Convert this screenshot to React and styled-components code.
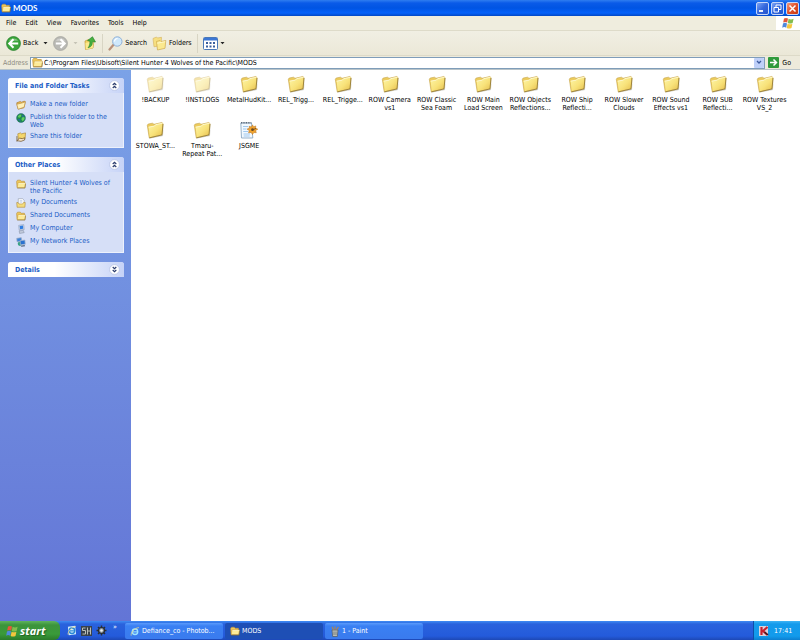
import React from "react";
import styled, { createGlobalStyle } from "styled-components";

const GlobalStyle = createGlobalStyle`
  * {
    box-sizing: border-box;
  }

  body {
    margin: 0;
    font-family: "DejaVu Sans Condensed", "Open Sans", sans-serif;
    font-size: 7px;
    line-height: 8px;
    color: #000;
  }

  button, input {
    font: inherit;
    color: inherit;
    border: none;
    background: none;
    padding: 0;
    margin: 0;
  }

  svg {
    display: block;
    flex: none;
  }
`;

const Window = styled.div`
  min-height: 100vh;
  display: flex;
  flex-direction: column;
  background: #fff;
`;

const TitleBar = styled.header`
  height: 16px;
  display: flex;
  align-items: center;
  gap: 2px;
  padding: 0 1px;
  color: #fff;
  background: linear-gradient(#2f7df0 0, #0a5be8 3px, #0054e3 8px, #0562fa 13px, #0348c4 16px);
`;

const Title = styled.h1`
  flex: 1;
  margin: 0;
  font-size: 8px;
  font-family: Lato, "Open Sans", sans-serif;
  font-weight: 700;
`;

const WindowButton = styled.button`
  width: 13px;
  height: 13px;
  border: 1px solid #c5d6f8;
  border-radius: 2px;
  background: ${(props) =>
    props.$close
      ? "linear-gradient(135deg, #f09a80, #e0502a 50%, #c83a12)"
      : "linear-gradient(135deg, #7ea4f4, #3367dd 50%, #2354cc)"};
`;

const MenuBar = styled.nav`
  height: 15px;
  display: flex;
  align-items: center;
  padding-left: 6px;
  gap: 9px;
  background: #efedde;
  border-bottom: 1px solid #dedbc9;
`;

const MenuItem = styled.button``;

const Flag = styled.div`
  margin-left: auto;
  width: 24px;
  height: 14px;
  display: flex;
  align-items: center;
  justify-content: center;
  background: #fff;
`;

const ToolBar = styled.div`
  height: 25px;
  display: flex;
  align-items: center;
  padding-left: 6px;
  gap: 5px;
  background: linear-gradient(#f1efe3, #ebe8d7);
  border-bottom: 1px solid #dddac8;
`;

const ToolButton = styled.button`
  display: flex;
  align-items: center;
  gap: 2px;
  height: 18px;
`;

const Divider = styled.div`
  width: 1px;
  height: 19px;
  background: #d8d5c4;
`;

const AddressBar = styled.form`
  height: 14px;
  display: flex;
  align-items: center;
  padding: 0 9px 0 3px;
  background: #edeadb;
  border-bottom: 1px solid #b9c4c9;
`;

const AddressLabel = styled.label`
  width: 27px;
  color: #8d8b80;
`;

const AddressField = styled.div`
  flex: 1;
  height: 12px;
  display: flex;
  align-items: center;
  gap: 1px;
  padding-left: 1px;
  background: #fff;
  border: 1px solid #7f9db9;
`;

const AddressInput = styled.input`
  flex: 1;
  min-width: 0;
  height: 10px;
  outline: none;
`;

const DropButton = styled.button`
  width: 10px;
  height: 10px;
  display: flex;
  align-items: center;
  justify-content: center;
  border-radius: 1px;
  background: #bfd0f8;
`;

const GoButton = styled.button`
  display: flex;
  align-items: center;
  gap: 3px;
  margin-left: 3px;
`;

const Main = styled.div`
  flex: 1;
  display: flex;
`;

const Sidebar = styled.aside`
  width: 131px;
  flex: none;
  padding: 8px 7px 8px 8px;
  display: flex;
  flex-direction: column;
  gap: 9px;
  background: linear-gradient(#7ba2e7, #6375d6);
`;

const Panel = styled.section`
  background: #d6dff7;
  border-radius: 3px 3px 0 0;
`;

const PanelHeader = styled.div`
  height: 15px;
  display: flex;
  align-items: center;
  justify-content: space-between;
  padding: 0 4px 0 7px;
  border-radius: 3px 3px 0 0;
  background: linear-gradient(90deg, #fff 40%, #c6d3f7);
`;

const PanelTitle = styled.h2`
  margin: 0;
  font-size: 7px;
  font-weight: 700;
  color: #215dc6;
`;

const TaskList = styled.ul`
  list-style: none;
  margin: 0;
  padding: 6px 4px 4px 7px;
  display: flex;
  flex-direction: column;
  gap: 1px;
  border: 1px solid #edf1fc;
  border-top: none;
`;

const TaskLink = styled.a`
  padding: 1px 0;
  display: flex;
  gap: 4px;
  color: #215dc6;
  text-decoration: none;
  white-space: pre;
`;

const Files = styled.main`
  flex: 1;
  display: grid;
  grid-template-columns: repeat(auto-fill, minmax(46px, 1fr));
  grid-auto-rows: 46px;
  padding: 5px 12px 5px 1px;
`;

const FileItem = styled.button`
  display: flex;
  flex-direction: column;
  align-items: center;
  gap: 3px;
  white-space: pre;
  text-align: center;

  svg {
    opacity: ${(props) => (props.$hidden ? 0.5 : 1)};
  }
`;

const TaskBar = styled.footer`
  height: 19px;
  display: flex;
  align-items: stretch;
  color: #fff;
  background: linear-gradient(#3f8cf3 0, #2a62dd 3px, #245bdb 15px, #1d48b5 19px);
`;

const StartButton = styled.button`
  width: 60px;
  display: flex;
  align-items: center;
  gap: 2px;
  padding-left: 6px;
  font-family: "Open Sans", sans-serif;
  font-size: 11px;
  font-weight: 700;
  font-style: italic;
  text-shadow: 1px 1px 1px #1f5f22;
  border-radius: 0 6px 6px 0;
  background: linear-gradient(#5fb45d 0, #3c943b 4px, #3a9a3a 13px, #2b7a2b 19px);
`;

const QuickLaunch = styled.div`
  width: 64px;
  display: flex;
  align-items: center;
  gap: 4px;
  padding-left: 7px;
`;

const MoreButton = styled.button`
  align-self: flex-start;
  padding-top: 2px;
  margin-left: 2px;
`;

const WindowTab = styled.button`
  width: 98px;
  margin: 2px 1px 1px 1px;
  display: flex;
  align-items: center;
  gap: 2px;
  padding-left: 5px;
  border-radius: 2px;
  background: ${(props) =>
    props.$active ? "#1e4fb5" : "linear-gradient(#5b9bfb, #3a80f3 3px, #3a7bee)"};
`;

const Tray = styled.div`
  margin-left: auto;
  width: 47px;
  display: flex;
  align-items: center;
  gap: 5px;
  padding-left: 5px;
  border-left: 1px solid #0e4fa8;
  background: linear-gradient(#3fb4f5 0, #149aeb 3px, #129bec 15px, #0d7fd0 19px);
`;

const LargeFolder = () => (
  <svg width="18" height="18" viewBox="0 0 18 18">
    <defs>
      <linearGradient id="face" x1="0" y1="0" x2="1" y2="1">
        <stop offset="0" stopColor="#fdf6a8" />
        <stop offset=".55" stopColor="#f8e27a" />
        <stop offset="1" stopColor="#e6bf4e" />
      </linearGradient>
    </defs>
    <path d="M4 17.500 17 15 17.600 4.500 16.500 14 3.500 17Z" fill="#9a9a90" opacity=".5" />
    <path d="M1.300 4.200 2.200 3 6.500 2.200 8 3.300 15.800 1.500 17 2.500 16 13.800 3.200 16.800Z" fill="#eccb5c" stroke="#c6a54c" strokeWidth=".6" />
    <path d="m2.600 6 5.700-1 1.300-1.500 7-1.500-1 11.300L3.800 16.200Z" fill="url(#face)" />
    <path d="m2.600 6.100 5.700-1L9.600 3.700l6.900-1.500" fill="none" stroke="#fffde0" strokeWidth=".8" />
    <path d="M17 3 16 13.900 3.300 16.900" fill="none" stroke="#8f762f" strokeWidth=".8" />
  </svg>
);

const Folder = ({ size = 10 }) => (
  <svg width={size} height={size} viewBox="0 0 11 11">
    <path d="M.7 2.700 1.700 1.300h3l1 1.200h3.600v6.700H1.200Z" fill="#eec75a" stroke="#b8903c" strokeWidth=".7" />
    <path d="M1.300 9.600 2.200 4.300h8.300L9.700 9.600Z" fill="#fdeb98" stroke="#c49c41" strokeWidth=".6" />
    <path d="M2.700 4.900h7.200" stroke="#fffbe0" strokeWidth=".7" />
    <path d="M1.300 10h8.600l.7-4.500" fill="none" stroke="#84672a" strokeWidth=".6" />
  </svg>
);

const OpenFolder = ({ size = 10 }) => (
  <svg width={size} height={size} viewBox="0 0 14 14">
    <path d="M1 4 6 2l1.500 1L12 1.500l1 1L11 11l-8 1.500Z" fill="#e9b94f" stroke="#a9772f" strokeWidth=".9" />
    <path d="m1 6 8-2 4-1.500L11.500 10 3 13Z" fill="#fff0b8" stroke="#b8893d" strokeWidth=".9" />
  </svg>
);

const ArrowBall = ({ size, color, edge, left }) => (
  <svg width={size} height={size} viewBox="0 0 16 16">
    <circle cx="8" cy="8" r="7.4" fill={color} stroke={edge} strokeWidth=".8" />
    <path d="M3 5a6 5 0 0 1 10 0Z" fill="#fff" opacity=".35" />
    <path
      d={left ? "M8 3.500 3.500 8 8 12.500M4 8h9" : "M8 3.500 12.500 8 8 12.500M12 8H3"}
      fill="none"
      stroke="#fff"
      strokeWidth="2.2"
    />
  </svg>
);

const Caret = ({ color = "#222" }) => (
  <svg width="5" height="4" viewBox="0 0 5 4">
    <path d="M.5 1h4l-2 2.200Z" fill={color} />
  </svg>
);

const UpFolder = () => (
  <svg width="14" height="14" viewBox="0 0 14 14">
    <path d="M2 5 5.500 3.500l1 1L11 3.500 10 12l-7.500 1.500Z" fill="#f2d160" stroke="#c29b3c" strokeWidth=".7" />
    <path d="m2.500 7 8-2L9.800 12l-7 1.400Z" fill="#fbe98c" />
    <path d="M5 11.800C8.500 11 9.500 8.500 9.300 5.800L12.500 6 9.500.7 4.500 4.600l2.400.6C7 8 6.500 10 5 11.800Z" fill="#46b040" stroke="#24802a" strokeWidth=".6" />
  </svg>
);

const SearchIcon = () => (
  <svg width="15" height="15" viewBox="0 0 15 15">
    <path d="M1.500 13.500 5.500 8.800" stroke="#b9917a" strokeWidth="2.200" strokeLinecap="round" />
    <circle cx="9.300" cy="5.500" r="4.700" fill="#cfe8fb" stroke="#8fb0d6" />
    <path d="M6.500 5.500a3 3 0 0 1 3-3" stroke="#fff" fill="none" strokeWidth="1.200" />
  </svg>
);

const FoldersIcon = () => (
  <svg width="15" height="15" viewBox="0 0 15 15">
    <path d="M1 2.500 4.500 1l1 1 4-.7L9 9.500l-7 1.300Z" fill="#f6df80" stroke="#d9b968" strokeWidth=".7" />
    <path d="m4.500 5.500 3.500-1 1 1 4.800-1L13 12.300 5.500 14Z" fill="#fbe98f" stroke="#cfa94c" strokeWidth=".7" />
    <path d="m5.200 7.200 8-1.500" stroke="#fffbd8" strokeWidth=".8" />
  </svg>
);

const ViewsIcon = () => (
  <svg width="15" height="13" viewBox="0 0 15 13">
    <rect x=".5" y=".5" width="14" height="12" rx="1" fill="#fff" stroke="#4a78b8" />
    <path d="M1 1h13v2.500H1Z" fill="#3c77d4" />
    <path d="M3 5h2v2H3zM6.500 5h2v2h-2zM10 5h2v2h-2zM3 8.500h2v2H3zM6.500 8.500h2v2h-2zM10 8.500h2v2h-2z" fill="#3b5f9d" />
  </svg>
);

const WindowsFlag = ({ size = 12 }) => (
  <svg width={size} height={size} viewBox="0 0 12 12">
    <path d="M2 1.500q2-1.200 4 0L5.200 5.600q-2-1.200-4 0Z" fill="#e5573a" />
    <path d="M6.600 1.800q2.300 1.200 5 0l-1 4.200q-2.600 1.200-4.800 0Z" fill="#83bd4d" />
    <path d="M1 6.400q2-1.200 4 0L4.200 10.700q-2-1.200-4 0Z" fill="#5088dc" />
    <path d="M5.600 6.700q2.200 1.200 4.800 0l-.9 4.200q-2.600 1.200-4.800 0Z" fill="#f5c63d" />
  </svg>
);

const Chevrons = ({ down }) => (
  <svg width="11" height="11" viewBox="0 0 11 11">
    <circle cx="5.500" cy="5.500" r="4.900" fill="#fff" stroke="#b5c1e3" strokeWidth=".8" />
    <path
      d={down ? "m3.700 3 1.800 1.700L7.300 3M3.700 6l1.800 1.700L7.300 6" : "m3.700 5 1.800-1.700L7.300 5M3.700 8l1.800-1.700L7.300 8"}
      fill="none"
      stroke="#27396b"
      strokeWidth="1.100"
    />
  </svg>
);

const Globe = () => (
  <svg width="10" height="10" viewBox="0 0 11 11">
    <circle cx="5.500" cy="5.500" r="4.900" fill="#1f8a4c" stroke="#286581" strokeWidth=".6" />
    <path d="M2 3.500 4.500 1.500 6 3 4.500 5 3 5.200ZM6.500 5l2.500-.5.500 2L7.500 9 6 7.500Z" fill="#5fce62" />
    <path d="M6.500 2 9 3.500l-2 .8ZM2 6.500l2.500.5.500 2.500Z" fill="#2b64b5" />
  </svg>
);

const ShareIcon = () => (
  <svg width="10" height="10" viewBox="0 0 11 11">
    <path d="m2 2 3-1 1 1 4.500-1-.5 6.500-7.500 1Z" fill="#f4d66c" stroke="#a98330" strokeWidth=".7" />
    <path d="M1 4.500v6M1 9.500 4 6.800l3 .5 2.500-1v2.500L5.500 10.300Z" fill="#f7e3c5" stroke="#71562c" strokeWidth=".8" />
  </svg>
);

const DocsIcon = () => (
  <svg width="10" height="10" viewBox="0 0 11 11">
    <path d="M2.500.8h4.700L9 2.500v6H2.500Z" fill="#fff" stroke="#8790a3" strokeWidth=".6" />
    <path d="M4 3h3M4 4.500h3" stroke="#88a7d6" strokeWidth=".6" />
    <path d="M.8 5h1.500l1 1.500h4L8.300 5h1.900l-.4 5.200H1.200Z" fill="#f4dc7d" stroke="#a98330" strokeWidth=".6" />
  </svg>
);

const ComputerIcon = () => (
  <svg width="10" height="10" viewBox="0 0 11 11">
    <path d="m3 1.500 5.500-.8.500 5.500-5.500.5Z" fill="#dbe2ee" stroke="#7f90ad" strokeWidth=".6" />
    <path d="m4 2.300 3.700-.6.300 3.600-3.600.4Z" fill="#2f7ee3" />
    <path d="m3.500 7.500 4.500-.5 1 2.500-5 .9Z" fill="#c3cbdc" stroke="#8390a7" strokeWidth=".6" />
  </svg>
);

const NetworkIcon = () => (
  <svg width="10" height="10" viewBox="0 0 11 11">
    <path d="m.8 1.500 5-.8.400 4-5 .6Z" fill="#3b82d8" stroke="#9aaac4" strokeWidth=".8" />
    <circle cx="4.200" cy="7.500" r="2.300" fill="#38a184" />
    <path d="m4.500 4 5.300-.7.400 4.700-5.300.6Z" fill="#2a72cf" stroke="#a9b8cf" strokeWidth=".8" />
    <path d="m5 9.500 4.500-.6.500 1.200-4 .5Z" fill="#56657f" />
  </svg>
);

const NotePad = () => (
  <svg width="18" height="18" viewBox="0 0 18 18">
    <path d="M.8 2h10.700l1.300 15H1.500Z" fill="#f2f9ff" stroke="#7f9fbd" strokeWidth=".8" />
    <path d="M1 1.800h10.500" stroke="#53606e" strokeWidth="1.600" strokeDasharray=".9 .8" />
    <path d="M3 5.500h5M3 8h3.500M3.200 10.500h5M3.500 13h6.500M3.700 15h6" stroke="#8bbbe8" strokeWidth=".8" />
    <path d="m12.500 3.800 1 2 2.300-.9-.2 2.200 2.200 1.100-2.200 1.300.7 2.200-2.400-.2-1.400 2-1.300-2.100-2.700.4.800-2.200-2.300-1.500 2.400-.9-.3-1.900 2.300.6Z" fill="#f0a32e" stroke="#b8701c" strokeWidth=".5" />
    <circle cx="12.500" cy="8.700" r="1.400" fill="#6b4a22" />
    <path d="m12.500 8.900 3.500-1.500" stroke="#6b4a22" strokeWidth=".9" />
  </svg>
);

const IEIcon = ({ boxed }) => (
  <svg width="10" height="11" viewBox="0 0 11 11">
    {boxed && <path d="M1 1.500 9 .3l1 9.200-8 1.200Z" fill="#d3ecfa" />}
    <circle cx="5.500" cy="5.800" r="3" fill="none" stroke={boxed ? "#2687d6" : "#9fe4ff"} strokeWidth="1.500" />
    <path d="M3 5.900h5.500" stroke={boxed ? "#2687d6" : "#9fe4ff"} strokeWidth="1.200" />
    <path d="M1.300 10C.5 7 5 1.500 9.800 1.200" fill="none" stroke="#e5d58e" strokeWidth=".9" />
  </svg>
);

const HunterIcon = () => (
  <svg width="11" height="10" viewBox="0 0 11 10">
    <rect width="11" height="10" fill="#39424c" />
    <path d="M4.500 2H1.500v2.500h3V8h-3M6.500 1.500v7M9.500 1.500v7M6.500 5h3" fill="none" stroke="#b9beb8" />
  </svg>
);

const WheelIcon = () => (
  <svg width="11" height="11" viewBox="0 0 11 11">
    <path d="M5.500.5v10M.5 5.500h10M2 2l7 7M9 2 2 9" stroke="#2b2f36" strokeWidth="1.500" />
    <circle cx="5.500" cy="5.500" r="3" fill="#8b949b" stroke="#252a31" strokeWidth="1.200" />
    <circle cx="5.500" cy="5.500" r="1.300" fill="#edf1f3" />
  </svg>
);

const PaintIcon = () => (
  <svg width="10" height="11" viewBox="0 0 10 11">
    <path d="M2 4h6l-.7 6.500H2.700Z" fill="#b9bdb7" stroke="#4d5965" strokeWidth=".7" />
    <path d="M3.500 4 2 .8M5 4V.5M6.500 4 8.500 1" stroke="#b88645" strokeWidth="1.100" />
    <path d="M4 5.500v3.500M6 5.500v3.500" stroke="#68716f" strokeWidth=".8" />
  </svg>
);

const KasperskyIcon = () => (
  <svg width="10" height="10" viewBox="0 0 10 10">
    <rect width="9" height="10" fill="#d9d2dc" />
    <path d="M2.500 1v8M8.500 1 4 5 8.500 9" fill="none" stroke="#c8202e" strokeWidth="2.200" />
    <path d="m5.500 6 3.500 3" stroke="#3a1c24" strokeWidth="1.500" />
  </svg>
);

const tasks = [
  { name: "Make a new folder", icon: <OpenFolder /> },
  { name: "Publish this folder to the\nWeb", icon: <Globe /> },
  { name: "Share this folder", icon: <ShareIcon /> },
];

const places = [
  { name: "Silent Hunter 4 Wolves of\nthe Pacific", icon: <Folder /> },
  { name: "My Documents", icon: <DocsIcon /> },
  { name: "Shared Documents", icon: <Folder /> },
  { name: "My Computer", icon: <ComputerIcon /> },
  { name: "My Network Places", icon: <NetworkIcon /> },
];

const files = [
  { name: "!BACKUP", hidden: true },
  { name: "!INSTLOGS", hidden: true },
  { name: "MetalHudKit..." },
  { name: "REL_Trigg..." },
  { name: "REL_Trigge..." },
  { name: "ROW Camera\nvs1" },
  { name: "ROW Classic\nSea Foam" },
  { name: "ROW Main\nLoad Screen" },
  { name: "ROW Objects\nReflections..." },
  { name: "ROW Ship\nReflecti..." },
  { name: "ROW Slower\nClouds" },
  { name: "ROW Sound\nEffects vs1" },
  { name: "ROW SUB\nReflecti..." },
  { name: "ROW Textures\nVS_2" },
  { name: "STOWA_ST..." },
  { name: "Tmaru-\nRepeat Pat..." },
  { name: "JSGME", app: true },
];

const SidePanel = ({ title, items }) => (
  <Panel>
    <PanelHeader>
      <PanelTitle>{title}</PanelTitle>
      <button aria-label={title}>
        <Chevrons down={!items} />
      </button>
    </PanelHeader>
    {items && (
      <TaskList>
        {items.map((item) => (
          <li key={item.name}>
            <TaskLink href="#">
              {item.icon}
              <span>{item.name}</span>
            </TaskLink>
          </li>
        ))}
      </TaskList>
    )}
  </Panel>
);

const App = () => {
  return (
    <>
      <GlobalStyle />
      <Window>
        <TitleBar>
          <Folder />
          <Title>MODS</Title>
          <WindowButton aria-label="Minimize">
            <svg width="11" height="11" viewBox="0 0 11 11">
              <path d="M2 8h4" stroke="#fff" strokeWidth="1.800" />
            </svg>
          </WindowButton>
          <WindowButton aria-label="Restore">
            <svg width="11" height="11" viewBox="0 0 11 11">
              <path d="M4 4V2h5v4.500H7M2 4.500h4.500V9H2Z" fill="none" stroke="#fff" />
            </svg>
          </WindowButton>
          <WindowButton $close aria-label="Close">
            <svg width="11" height="11" viewBox="0 0 11 11">
              <path d="m2.500 2.500 6 6M8.500 2.500l-6 6" stroke="#fff" strokeWidth="1.500" />
            </svg>
          </WindowButton>
        </TitleBar>

        <MenuBar>
          {["File", "Edit", "View", "Favorites", "Tools", "Help"].map((name) => (
            <MenuItem key={name}>{name}</MenuItem>
          ))}
          <Flag>
            <WindowsFlag />
          </Flag>
        </MenuBar>

        <ToolBar>
          <ToolButton>
            <ArrowBall size={15} color="#3ba53a" edge="#267d2b" left />
            Back
          </ToolButton>
          <Caret />
          <ToolButton aria-label="Forward">
            <ArrowBall size={15} color="#b9b9b4" edge="#a3a39d" />
          </ToolButton>
          <Caret color="#c5c3b5" />
          <ToolButton aria-label="Up">
            <UpFolder />
          </ToolButton>
          <Divider />
          <ToolButton>
            <SearchIcon />
            Search
          </ToolButton>
          <ToolButton>
            <FoldersIcon />
            Folders
          </ToolButton>
          <Divider />
          <ToolButton aria-label="Views">
            <ViewsIcon />
            <Caret />
          </ToolButton>
        </ToolBar>

        <AddressBar>
          <AddressLabel htmlFor="address">Address</AddressLabel>
          <AddressField>
            <Folder size={11} />
            <AddressInput
              id="address"
              defaultValue="C:\Program Files\Ubisoft\Silent Hunter 4 Wolves of the Pacific\MODS"
            />
            <DropButton type="button" aria-label="Show addresses">
              <svg width="6" height="5" viewBox="0 0 6 5">
                <path d="m1 1 2 2 2-2" fill="none" stroke="#3d5a9e" strokeWidth="1.300" />
              </svg>
            </DropButton>
          </AddressField>
          <GoButton type="button">
            <svg width="11" height="11" viewBox="0 0 11 11">
              <rect width="11" height="11" rx="1" fill="#2f9a3c" />
              <path d="M2 5.500h6M5.500 2.500l3 3-3 3" fill="none" stroke="#fff" strokeWidth="1.500" />
            </svg>
            Go
          </GoButton>
        </AddressBar>

        <Main>
          <Sidebar>
            <SidePanel title="File and Folder Tasks" items={tasks} />
            <SidePanel title="Other Places" items={places} />
            <SidePanel title="Details" />
          </Sidebar>
          <Files>
            {files.map((file) => (
              <FileItem key={file.name} $hidden={file.hidden}>
                {file.app ? <NotePad /> : <LargeFolder />}
                <span>{file.name}</span>
              </FileItem>
            ))}
          </Files>
        </Main>

        <TaskBar>
          <StartButton>
            <WindowsFlag />
            start
          </StartButton>
          <QuickLaunch>
            <IEIcon boxed />
            <HunterIcon />
            <WheelIcon />
            <MoreButton>»</MoreButton>
          </QuickLaunch>
          <WindowTab>
            <IEIcon />
            Defiance_co - Photob...
          </WindowTab>
          <WindowTab $active>
            <Folder />
            MODS
          </WindowTab>
          <WindowTab>
            <PaintIcon />
            1 - Paint
          </WindowTab>
          <Tray>
            <KasperskyIcon />
            <time>17:41</time>
          </Tray>
        </TaskBar>
      </Window>
    </>
  );
};

export default App;
